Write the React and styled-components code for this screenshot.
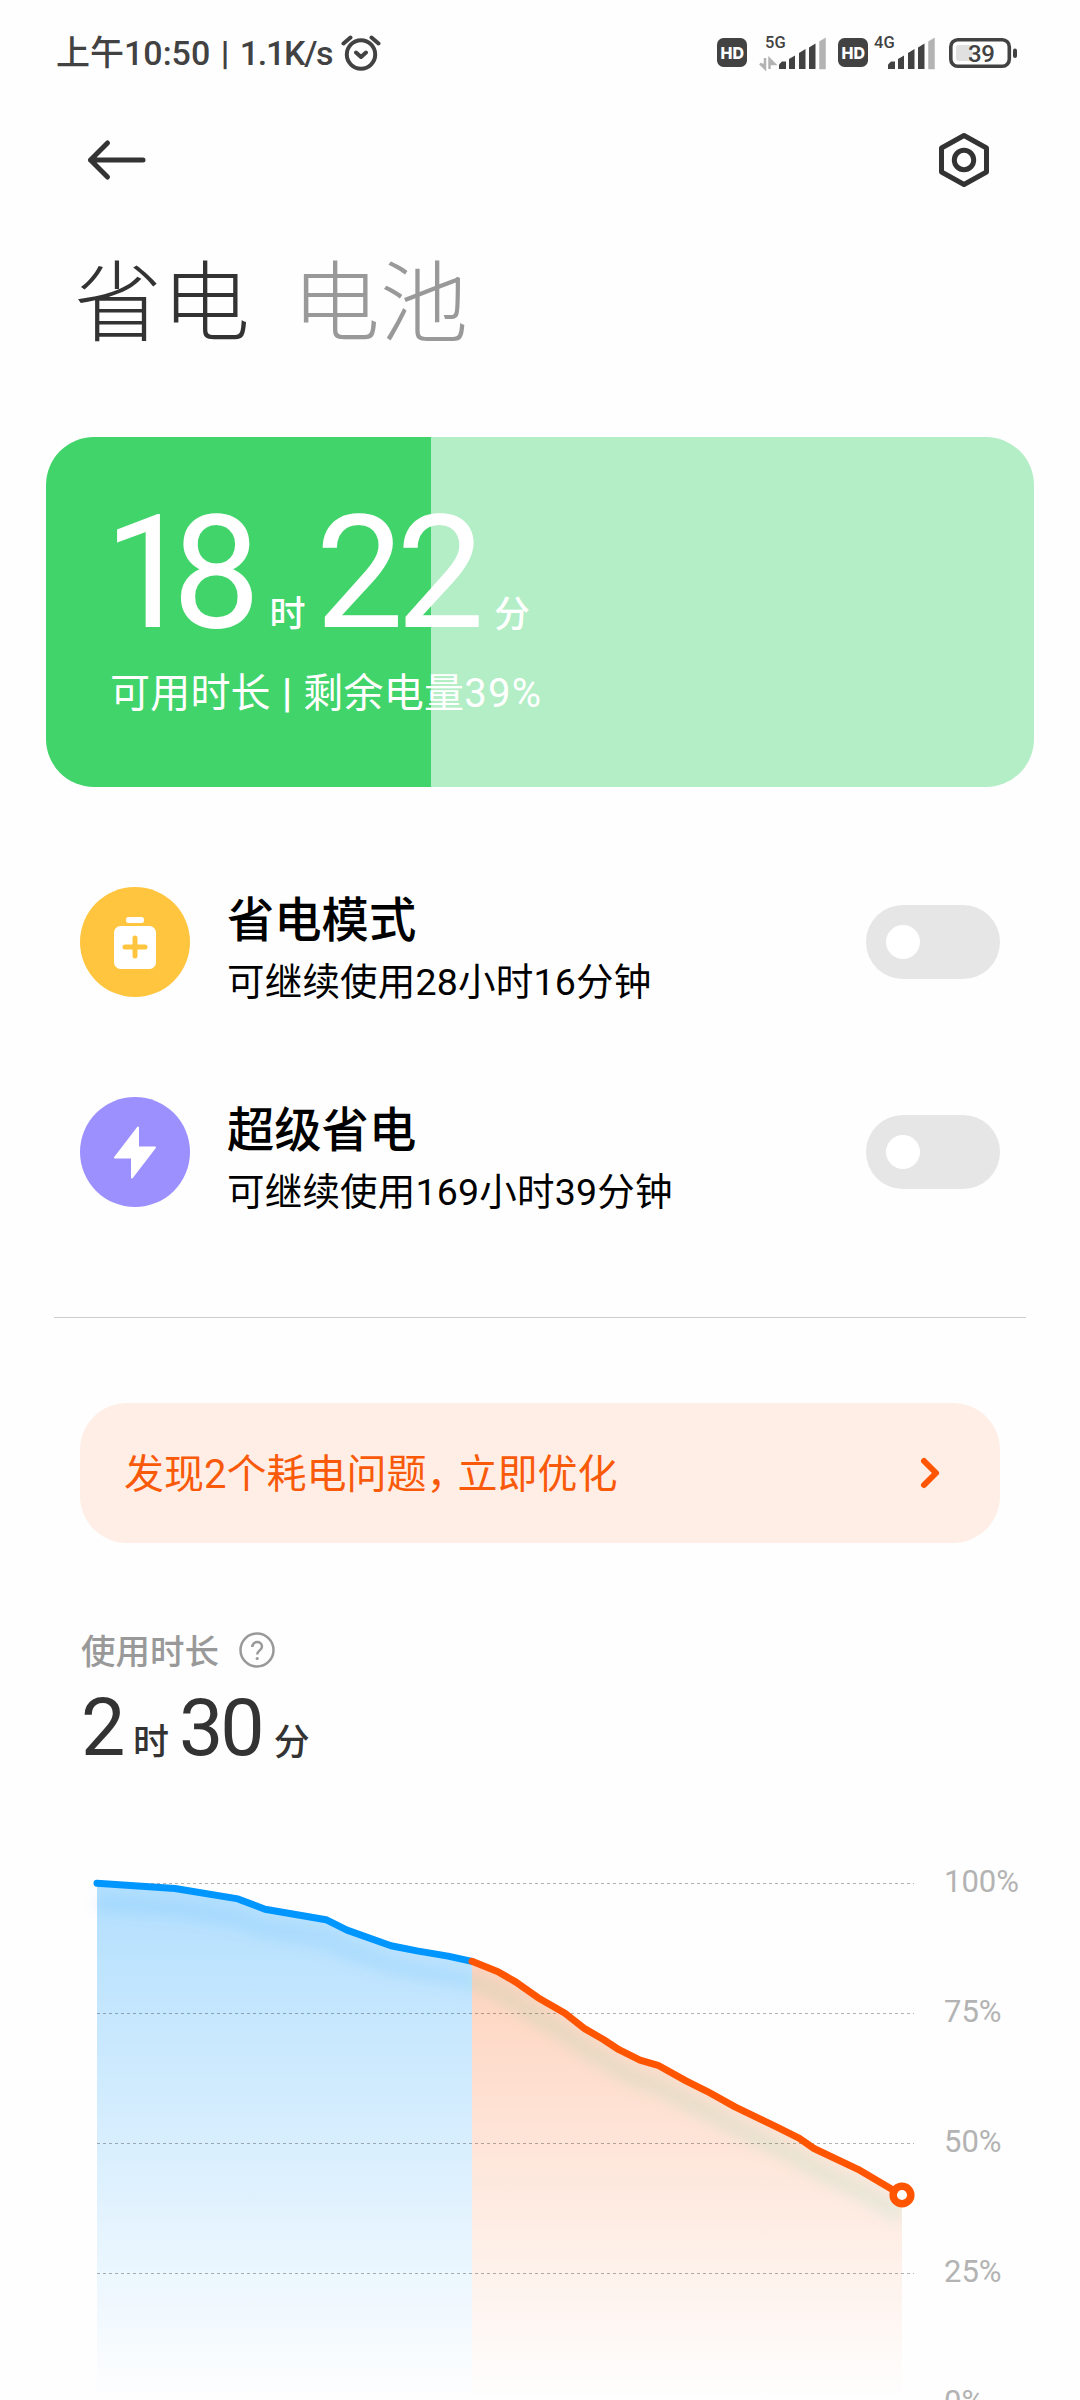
import React from "react";
import styled, { createGlobalStyle } from "styled-components";

const GlobalStyle = createGlobalStyle`
  * {
    box-sizing: border-box;
  }
  body {
    margin: 0;
    background-color: #fefefe;
    font-family: Roboto, "Noto Sans CJK SC", sans-serif;
    color: #333;
  }
  svg {
    display: block;
    flex: none;
  }
`;

const Page = styled.div`
  width: 1080px;
  height: 2400px;
  overflow: hidden;
  display: flex;
  flex-direction: column;
  white-space: nowrap;
`;

const StatusBar = styled.div`
  height: 105px;
  flex: none;
  padding: 0 63px 0 56px;
  display: flex;
  align-items: center;
  justify-content: space-between;
`;

const StatusGroup = styled.div`
  display: flex;
  align-items: center;
`;

const Clock = styled.span`
  width: 285px;
  font-size: 34px;
  font-weight: 500;
  line-height: 40px;
  color: #424242;
`;

const Speed = styled.span`
  letter-spacing: -1.3px;
`;

const Pipe = styled.span`
  margin: 0 ${props => props.gap};
  font-weight: 700;
`;

const HdBadge = styled.svg`
  margin-left: ${props => props.gap || "0"};
`;

const Signal = styled.svg`
  margin-left: ${props => props.gap || "0"};
`;

const Battery = styled.svg`
  margin-left: 14px;
`;

const Header = styled.div`
  height: 110px;
  flex: none;
  padding: 0 88px 0 86px;
  display: flex;
  align-items: center;
  justify-content: space-between;
`;

const Tabs = styled.div`
  height: 172px;
  flex: none;
  padding: 5px 0 0 74px;
  display: flex;
  align-items: center;
  gap: 42px;
`;

const Tab = styled.span`
  font-size: 88px;
  line-height: 100px;
  font-weight: 300;
  color: ${props => (props.active ? "#333" : "#999")};
`;

const Card = styled.div`
  height: 350px;
  flex: none;
  margin: 50px 46px 0;
  padding: 56px 0 0 58px;
  border-radius: 48px;
  color: #fff;
  background: linear-gradient(
    to right,
    #41d46a ${props => props.level}%,
    #b3eec6 ${props => props.level}%
  );
`;

const Duration = styled.div`
  display: flex;
  align-items: baseline;
  height: ${props => (props.big ? "160px" : "80px")};
  line-height: ${props => (props.big ? "160px" : "80px")};
`;

const Digits = styled.span`
  font-size: ${props => (props.big ? "157px" : "79px")};
  letter-spacing: ${props => props.spacing || "0"};
  margin-left: ${props => props.gap || "0"};
`;

const Unit = styled.span`
  font-size: 36px;
  font-weight: 500;
  margin-left: ${props => props.gap || "0"};
`;

const CardNote = styled.div`
  margin: 16px 0 0 6px;
  font-size: 40px;
  line-height: 50px;
  letter-spacing: 0.2px;
`;

const Percent = styled.span`
  letter-spacing: 1.3px;
`;

const Modes = styled.div`
  margin-top: 50px;
  flex: none;
`;

const Mode = styled.div`
  height: 210px;
  padding: 0 80px;
  display: flex;
  align-items: center;
`;

const ModeIcon = styled.div`
  width: 110px;
  height: 110px;
  border-radius: 50%;
  background-color: ${props => props.color};
  display: flex;
  align-items: center;
  justify-content: center;
`;

const ModeText = styled.div`
  flex: 1;
  padding: 12px 0 0 37px;
  color: #000;
`;

const ModeTitle = styled.div`
  font-size: 47.3px;
  line-height: 60px;
  font-weight: 500;
`;

const ModeNote = styled.div`
  margin-top: 8px;
  font-size: 37.5px;
  line-height: 46px;
  letter-spacing: 0.2px;
`;

const Toggle = styled.div`
  width: 134px;
  height: 74px;
  padding: 20px;
  border-radius: 37px;
  background-color: #e6e6e6;
`;

const Knob = styled.div`
  width: 34px;
  height: 34px;
  border-radius: 50%;
  background-color: #fff;
`;

const Divider = styled.div`
  height: 1px;
  flex: none;
  margin: 60px 54px 0;
  background-color: #ccc;
`;

const Alert = styled.div`
  height: 140px;
  flex: none;
  margin: 85px 80px 0;
  padding: 0 58px 0 44px;
  border-radius: 47px;
  background-color: #ffeee6;
  color: #f95a0a;
  font-size: 40px;
  line-height: 50px;
  display: flex;
  align-items: center;
  justify-content: space-between;
`;

const AlertText = styled.span`
  padding-top: 4px;
`;

const Comma = styled.span`
  letter-spacing: -9px;
`;

const UsageLabel = styled.div`
  height: 44px;
  flex: none;
  margin: 85px 0 0 81px;
  font-size: 34.5px;
  font-weight: 500;
  color: #999;
  display: flex;
  align-items: center;
  gap: 18px;
`;

const LabelText = styled.span`
  line-height: 44px;
  padding-top: 4px;
`;

const Usage = styled.div`
  margin: 16px 0 0 81px;
  flex: none;
`;

const Chart = styled.div`
  margin: 100px 0 0 80px;
  flex: none;
  display: flex;
`;

const Scale = styled.div`
  margin-left: 24px;
`;

const ScaleLabel = styled.div`
  height: 130px;
  font-size: 31px;
  line-height: 28px;
  color: #b3b3b3;
`;

const bars = [
  "M20 34v-4.500l3-3h4V34z",
  "M30 34V24l6-3.500V34z",
  "M40 34V18l6.500-4V34z",
  "M50 34V12.500l6.500-4V34z"
];

const SignalIcon = ({ label, arrows, gap }) => (
  <Signal gap={gap} width="67" height="36" viewBox="0 0 67 36">
    <text x="6" y="13" fontSize="16.500" fontWeight="500" fill="#424242">
      {label}
    </text>
    {arrows && (
      <path
        d="M6 23v9.500M1 28.500l5 5v-5M10.500 34V24l5 5h-5"
        fill="#b3b3b3"
        stroke="#b3b3b3"
        strokeWidth="2.500"
      />
    )}
    {bars.map(d => (
      <path key={d} d={d} fill="#424242" />
    ))}
    <path
      d="M60.500 34V6.500l6-3.500V34z"
      fill="#b3b3b3"
      stroke="#b3b3b3"
      strokeWidth="0.500"
      strokeLinejoin="round"
    />
  </Signal>
);

const Hd = ({ gap }) => (
  <HdBadge gap={gap} width="30" height="29" viewBox="0 0 30 29">
    <rect width="30" height="29" rx="6.500" fill="#424242" />
    <text
      x="3.500"
      y="20.500"
      fontFamily="Inter"
      fontWeight="800"
      fontSize="16.500"
      textLength="23.500"
      lengthAdjust="spacingAndGlyphs"
      fill="#fff"
    >
      HD
    </text>
  </HdBadge>
);

// [x, charge in percent]
const charged = [
  [97, 100], [175, 99], [238, 97], [265, 95], [326, 93],
  [347, 91], [391, 88], [417, 87], [448, 86], [472, 85]
];
const drained = [
  [472, 85], [498, 83], [516, 81], [538, 78], [565, 75], [585, 72],
  [603, 70], [619, 68], [640, 66], [658, 65], [686, 62], [707, 60],
  [735, 57], [778, 53], [799, 51], [814, 49], [858, 45], [902, 40]
];
const chartY = percent => 1883.3 + (100 - percent) * 5.2;
const toLine = points => points.map(([x, p]) => `${x},${chartY(p)}`).join(" ");
const toArea = points =>
  `${points[0][0]},2403 ${toLine(points)} ${points[points.length - 1][0]},2403`;

const BatteryChart = () => (
  <svg width="840" height="532" viewBox="80 1868 840 532">
    <defs>
      <linearGradient id="blue" gradientUnits="userSpaceOnUse" x1="0" y1="1883" x2="0" y2="2400">
        <stop offset="0" stopColor="#0096ff" stopOpacity="0.3" />
        <stop offset="1" stopColor="#0096ff" stopOpacity="0" />
      </linearGradient>
      <linearGradient id="orange" gradientUnits="userSpaceOnUse" x1="0" y1="1883" x2="0" y2="2400">
        <stop offset="0" stopColor="#ff5500" stopOpacity="0.3" />
        <stop offset="1" stopColor="#ff5500" stopOpacity="0" />
      </linearGradient>
      <filter id="soft" x="-5%" y="-20%" width="110%" height="150%">
        <feGaussianBlur stdDeviation="7" />
      </filter>
      <clipPath id="left">
        <rect x="80" y="1868" width="822" height="532" />
      </clipPath>
    </defs>
    <polygon points={toArea(charged)} fill="url(#blue)" />
    <polygon points={toArea(drained)} fill="url(#orange)" />
    {[100, 75, 50, 25].map(p => (
      <path
        key={p}
        d={`M97 ${Math.floor(chartY(p)) + 0.5}H914`}
        stroke="#000"
        strokeOpacity="0.3"
        strokeDasharray="3 3"
      />
    ))}
    <g clipPath="url(#left)">
      <g
        transform="translate(0 20)"
        fill="none"
        strokeOpacity="0.09"
        strokeWidth="17"
        filter="url(#soft)"
      >
        <polyline points={toLine(charged)} stroke="#0090e8" />
        <polyline points={toLine(drained)} stroke="#20c070" />
      </g>
    </g>
    <g fill="none" strokeWidth="7" strokeLinecap="round" strokeLinejoin="round">
      <polyline points={toLine(charged)} stroke="#0096ff" />
      <polyline points={toLine(drained)} stroke="#ff5500" />
    </g>
    <circle cx="902" cy="2195" r="8.800" fill="#fff" stroke="#ff5500" strokeWidth="7.500" />
  </svg>
);

const modes = [
  {
    title: "省电模式",
    note: "可继续使用28小时16分钟",
    color: "#ffc53f",
    icon: (
      <svg width="44" height="54" viewBox="0 0 44 54">
        <rect x="13" y="2" width="18" height="6" rx="2.500" fill="#fff" />
        <rect x="1" y="11" width="42" height="43" rx="6.500" fill="#fff" />
        <path d="M22 23v18M12 32h20" stroke="#ffc53f" strokeWidth="5" strokeLinecap="round" />
      </svg>
    )
  },
  {
    title: "超级省电",
    note: "可继续使用169小时39分钟",
    color: "#9c90ff",
    icon: (
      <svg width="44" height="54" viewBox="0 0 44 54">
        <path
          d="M25 2.500V22.500H42L19 52.500V32.500H2z"
          fill="#fff"
          stroke="#fff"
          strokeWidth="2"
          strokeLinejoin="round"
        />
      </svg>
    )
  }
];

const App = () => (
  <>
    <GlobalStyle />
    <Page>
      <StatusBar>
        <StatusGroup>
          <Clock>
            上午10:50 <Pipe gap="2px">|</Pipe> <Speed>1.1K/s</Speed>
          </Clock>
          <svg width="40" height="38" viewBox="0 0 40 38" fill="none" stroke="#424242" strokeWidth="4" strokeLinecap="round" strokeLinejoin="round">
            <circle cx="20" cy="20.500" r="14.200" />
            <path d="M2.500 9.500l7-6M37.500 9.500l-7-6M15 18.500l5 4.500 5-4.500" />
          </svg>
        </StatusGroup>
        <StatusGroup>
          <Hd />
          <SignalIcon label="5G" arrows gap="12px" />
          <Hd gap="12px" />
          <SignalIcon label="4G" />
          <Battery width="68" height="30" viewBox="0 0 68 30">
            <rect x="1.800" y="1.800" width="58.500" height="26.400" rx="7" fill="none" stroke="#424242" strokeWidth="3.600" />
            <rect x="7" y="7" width="16" height="16" rx="3" fill="#e0e0e0" />
            <rect x="64" y="10.500" width="4" height="9.500" rx="2" fill="#424242" />
            <text x="19" y="24" fontSize="24" fontWeight="500" fill="#424242" textLength="27">
              39
            </text>
          </Battery>
        </StatusGroup>
      </StatusBar>
      <Header>
        <svg width="60" height="42" viewBox="0 0 60 42" fill="none" stroke="#333" strokeWidth="5" strokeLinecap="round" strokeLinejoin="round">
          <path d="M57 21H4.500M21.500 4L4.500 21l17 17" />
        </svg>
        <svg width="56" height="56" viewBox="0 0 56 56" fill="none" stroke="#333" strokeWidth="5" strokeLinejoin="round">
          <path d="M28 3.500L50.500 16v24L28 52.500 5.500 40V16z" />
          <circle cx="28" cy="28" r="9.700" />
        </svg>
      </Header>
      <Tabs>
        <Tab active>省电</Tab>
        <Tab>电池</Tab>
      </Tabs>
      <Card level={39}>
        <Duration big>
          <Digits big spacing="-20px">18</Digits>
          <Unit gap="29px">时</Unit>
          <Digits big gap="10px" spacing="-7.5px">22</Digits>
          <Unit gap="17px">分</Unit>
        </Duration>
        <CardNote>
          可用时长 <Pipe gap="1px">|</Pipe> 剩余电量<Percent>39%</Percent>
        </CardNote>
      </Card>
      <Modes>
        {modes.map(mode => (
          <Mode key={mode.title}>
            <ModeIcon color={mode.color}>{mode.icon}</ModeIcon>
            <ModeText>
              <ModeTitle>{mode.title}</ModeTitle>
              <ModeNote>{mode.note}</ModeNote>
            </ModeText>
            <Toggle>
              <Knob />
            </Toggle>
          </Mode>
        ))}
      </Modes>
      <Divider />
      <Alert>
        <AlertText>
          发现2个耗电问题<Comma>，</Comma>立即优化
        </AlertText>
        <svg width="24" height="36" viewBox="0 0 24 36" fill="none" stroke="#ff5500" strokeWidth="6" strokeLinecap="round" strokeLinejoin="round">
          <path d="M6 6l12 12L6 30" />
        </svg>
      </Alert>
      <UsageLabel>
        <LabelText>使用时长</LabelText>
        <svg width="40" height="40" viewBox="0 0 40 40" fill="none" stroke="#999" strokeWidth="2.500">
          <circle cx="20" cy="20" r="16.500" />
          <path d="M15.300 17c0-6.500 9.700-6.500 9.700-.500 0 3.800-4.800 4-4.800 8" />
          <circle cx="20.200" cy="28.500" r="1.600" fill="#999" stroke="none" />
        </svg>
      </UsageLabel>
      <Usage>
        <Duration>
          <Digits spacing="-1px">2</Digits>
          <Unit gap="8.5px">时</Unit>
          <Digits gap="10px" spacing="-3px">30</Digits>
          <Unit gap="12px">分</Unit>
        </Duration>
      </Usage>
      <Chart>
        <BatteryChart />
        <Scale>
          {["100%", "75%", "50%", "25%", "0%"].map(label => (
            <ScaleLabel key={label}>{label}</ScaleLabel>
          ))}
        </Scale>
      </Chart>
    </Page>
  </>
);

export default App;
